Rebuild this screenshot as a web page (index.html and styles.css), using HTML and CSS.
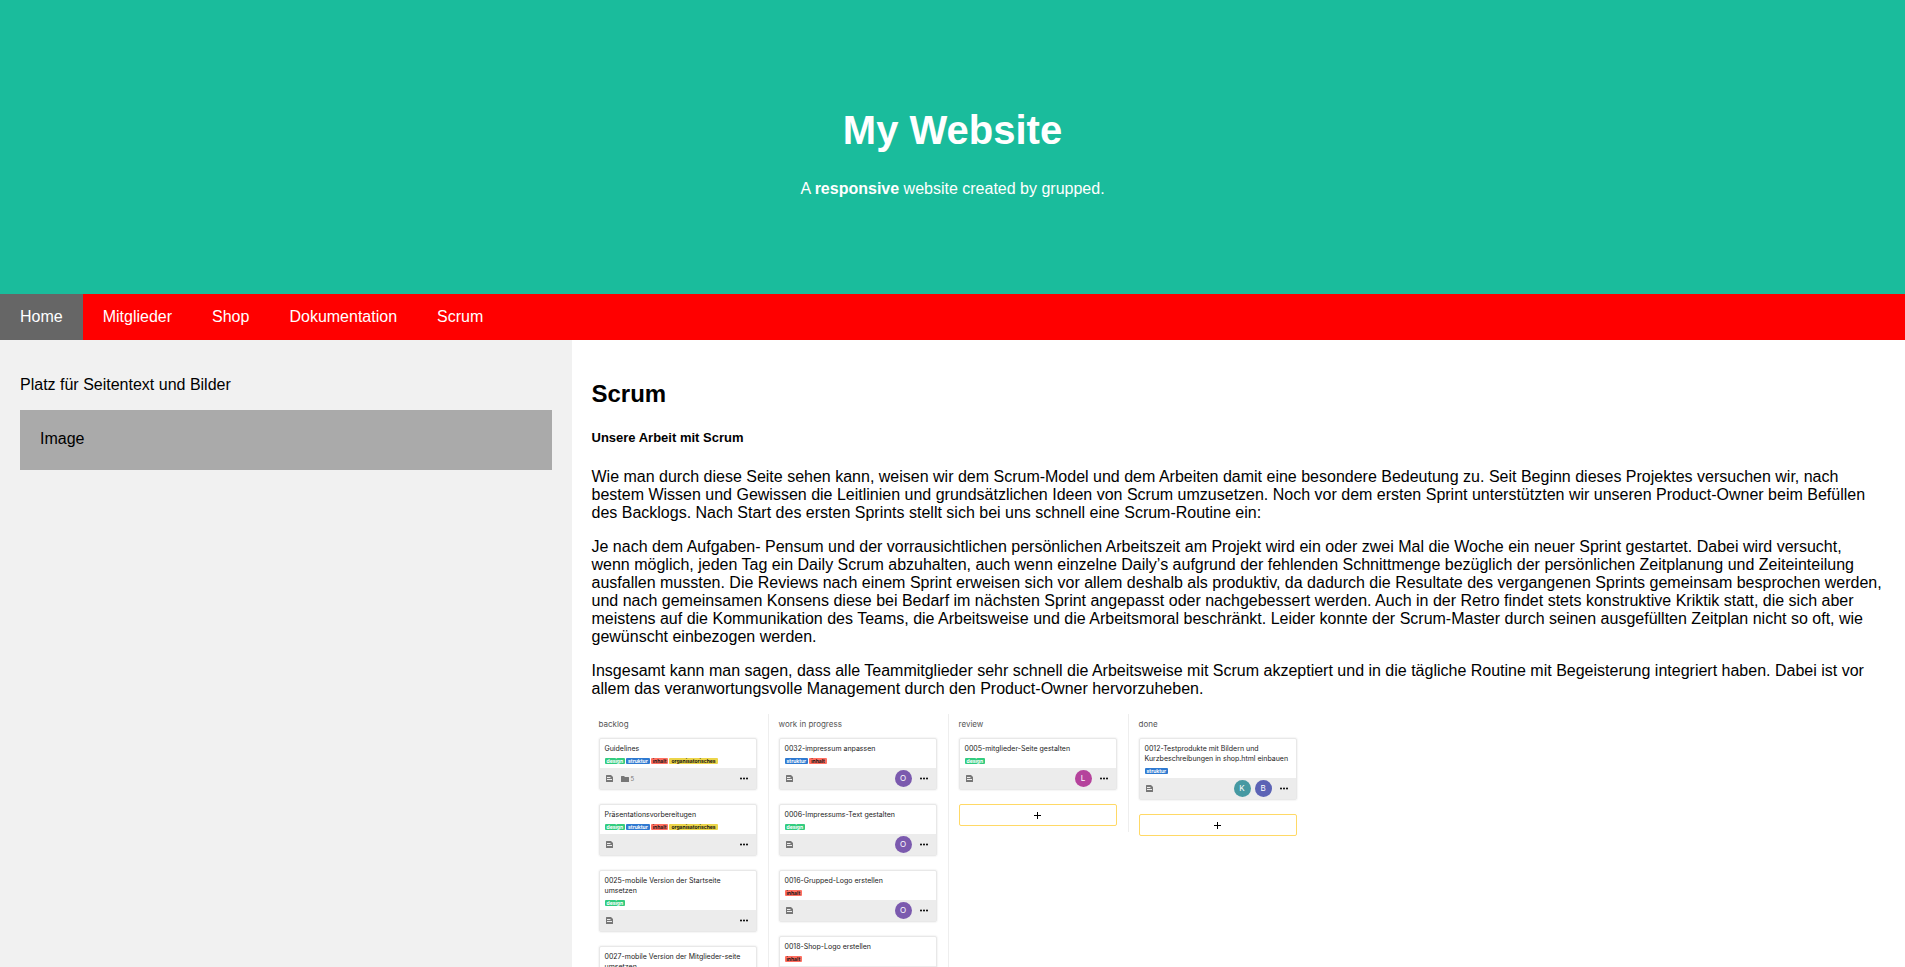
FILE: index.html
```
<!DOCTYPE html>
<html lang="de">
<head>
<meta charset="utf-8">
<meta name="viewport" content="width=device-width, initial-scale=1">
<title>My Website</title>
<link rel="stylesheet" href="styles.css">
</head>
<body>
<svg class="sprites" aria-hidden="true">
  <symbol id="note" viewBox="0 0 14 14"><path fill="#777" fill-rule="evenodd" d="M1 0h9l4 4v9a1 1 0 0 1-1 1H1a1 1 0 0 1-1-1V1a1 1 0 0 1 1-1zM2 4v2h7V4zM2 8v2h10V8z"/></symbol>
  <symbol id="folder" viewBox="0 0 16 12"><path fill="#777" d="M1 0h5l2 2h7a1 1 0 0 1 1 1v8a1 1 0 0 1-1 1H1a1 1 0 0 1-1-1V1a1 1 0 0 1 1-1z"/></symbol>
  <symbol id="dots" viewBox="0 0 16 4"><circle cx="2" cy="2" r="2"/><circle cx="8" cy="2" r="2"/><circle cx="14" cy="2" r="2"/></symbol>
  <symbol id="plus" viewBox="0 0 7 7"><path d="M3 0h1v3h3v1H4v3H3V4H0V3h3z"/></symbol>
</svg>

<header class="header">
  <h1>My Website</h1>
  <p>A <b>responsive</b> website created by grupped.</p>
</header>

<nav class="navbar">
  <a class="active" href="#">Home</a>
  <a href="#">Mitglieder</a>
  <a href="#">Shop</a>
  <a href="#">Dokumentation</a>
  <a href="#">Scrum</a>
</nav>

<div class="row">
  <aside class="side">
    <p>Platz für Seitentext und Bilder</p>
    <div class="fakeimg">Image</div>
  </aside>
  <main class="main">
    <h2>Scrum</h2>
    <h5>Unsere Arbeit mit Scrum</h5>
    <p>Wie man durch diese Seite sehen kann, weisen wir dem Scrum-Model und dem Arbeiten damit eine besondere Bedeutung zu. Seit Beginn dieses Projektes versuchen wir, nach bestem Wissen und Gewissen die Leitlinien und grundsätzlichen Ideen von Scrum umzusetzen. Noch vor dem ersten Sprint unterstützten wir unseren Product-Owner beim Befüllen des Backlogs. Nach Start des ersten Sprints stellt sich bei uns schnell eine Scrum-Routine ein:</p>
    <p>Je nach dem Aufgaben- Pensum und der vorrausichtlichen persönlichen Arbeitszeit am Projekt wird ein oder zwei Mal die Woche ein neuer Sprint gestartet. Dabei wird versucht,<br>wenn möglich, jeden Tag ein Daily Scrum abzuhalten, auch wenn einzelne Daily’s aufgrund der fehlenden Schnittmenge bezüglich der persönlichen Zeitplanung und Zeiteinteilung ausfallen mussten. Die Reviews nach einem Sprint erweisen sich vor allem deshalb als produktiv, da dadurch die Resultate des vergangenen Sprints gemeinsam besprochen werden, und nach gemeinsamen Konsens diese bei Bedarf im nächsten Sprint angepasst oder nachgebessert werden. Auch in der Retro findet stets konstruktive Kriktik statt, die sich aber meistens auf die Kommunikation des Teams, die Arbeitsweise und die Arbeitsmoral beschränkt. Leider konnte der Scrum-Master durch seinen ausgefüllten Zeitplan nicht so oft, wie gewünscht einbezogen werden.</p>
    <p>Insgesamt kann man sagen, dass alle Teammitglieder sehr schnell die Arbeitsweise mit Scrum akzeptiert und in die tägliche Routine mit Begeisterung integriert haben. Dabei ist vor allem das veranwortungsvolle Management durch den Product-Owner hervorzuheben.</p>

    <section class="board" aria-label="Scrum-Board">
      <div class="column">
        <h3>backlog</h3>
        <article class="card">
          <div class="body"><h4>Guidelines</h4>
            <div class="tags"><span class="tag design">design</span><span class="tag struktur">struktur</span><span class="tag inhalt">inhalt</span><span class="tag orga">organisatorisches</span></div></div>
          <div class="foot"><svg class="note"><use href="#note"/></svg><svg class="folder"><use href="#folder"/></svg><span class="count">5</span><svg class="dots"><use href="#dots"/></svg></div>
        </article>
        <article class="card">
          <div class="body"><h4>Präsentationsvorbereitugen</h4>
            <div class="tags"><span class="tag design">design</span><span class="tag struktur">struktur</span><span class="tag inhalt">inhalt</span><span class="tag orga">organisatorisches</span></div></div>
          <div class="foot"><svg class="note"><use href="#note"/></svg><svg class="dots"><use href="#dots"/></svg></div>
        </article>
        <article class="card">
          <div class="body"><h4>0025-mobile Version der Startseite<br>umsetzen</h4>
            <div class="tags"><span class="tag design">design</span></div></div>
          <div class="foot"><svg class="note"><use href="#note"/></svg><svg class="dots"><use href="#dots"/></svg></div>
        </article>
        <article class="card">
          <div class="body"><h4>0027-mobile Version der Mitglieder-seite<br>umsetzen</h4>
            <div class="tags"><span class="tag design">design</span></div></div>
          <div class="foot"><svg class="note"><use href="#note"/></svg><svg class="dots"><use href="#dots"/></svg></div>
        </article>
      </div>

      <div class="column">
        <h3>work in progress</h3>
        <article class="card">
          <div class="body"><h4>0032-impressum anpassen</h4>
            <div class="tags"><span class="tag struktur">struktur</span><span class="tag inhalt">inhalt</span></div></div>
          <div class="foot"><svg class="note"><use href="#note"/></svg><span class="people"><span class="avatar violet">O</span></span><svg class="dots"><use href="#dots"/></svg></div>
        </article>
        <article class="card">
          <div class="body"><h4>0006-Impressums-Text gestalten</h4>
            <div class="tags"><span class="tag design">design</span></div></div>
          <div class="foot"><svg class="note"><use href="#note"/></svg><span class="people"><span class="avatar violet">O</span></span><svg class="dots"><use href="#dots"/></svg></div>
        </article>
        <article class="card">
          <div class="body"><h4>0016-Grupped-Logo erstellen</h4>
            <div class="tags"><span class="tag inhalt">inhalt</span></div></div>
          <div class="foot"><svg class="note"><use href="#note"/></svg><span class="people"><span class="avatar violet">O</span></span><svg class="dots"><use href="#dots"/></svg></div>
        </article>
        <article class="card">
          <div class="body"><h4>0018-Shop-Logo erstellen</h4>
            <div class="tags"><span class="tag inhalt">inhalt</span></div></div>
          <div class="foot"><svg class="note"><use href="#note"/></svg><span class="people"><span class="avatar violet">O</span></span><svg class="dots"><use href="#dots"/></svg></div>
        </article>
      </div>

      <div class="column short">
        <h3>review</h3>
        <article class="card">
          <div class="body"><h4>0005-mitglieder-Seite gestalten</h4>
            <div class="tags"><span class="tag design">design</span></div></div>
          <div class="foot"><svg class="note"><use href="#note"/></svg><span class="people"><span class="avatar magenta">L</span></span><svg class="dots"><use href="#dots"/></svg></div>
        </article>
        <button class="add" type="button" aria-label="Karte hinzufügen"><svg class="plus"><use href="#plus"/></svg></button>
      </div>

      <div class="column short">
        <h3>done</h3>
        <article class="card">
          <div class="body"><h4>0012-Testprodukte mit Bildern und<br>Kurzbeschreibungen in shop.html einbauen</h4>
            <div class="tags"><span class="tag struktur">struktur</span></div></div>
          <div class="foot"><svg class="note"><use href="#note"/></svg><span class="people"><span class="avatar teal">K</span><span class="avatar blue">B</span></span><svg class="dots"><use href="#dots"/></svg></div>
        </article>
        <button class="add" type="button" aria-label="Karte hinzufügen"><svg class="plus"><use href="#plus"/></svg></button>
      </div>
    </section>
  </main>
</div>
</body>
</html>
```
FILE: styles.css
```
* { box-sizing: border-box; }

body {
  margin: 0;
  font-family: Arial, "Liberation Sans", Helvetica, sans-serif;
}

.sprites { display: none; }

.header {
  padding: 80px;
  text-align: center;
  background: #1abc9c;
  color: #fff;
}
.header h1 { margin: 27px 0; font-size: 40px; line-height: 46px; }
.header p { margin: 16px 0; }

.navbar { display: flex; background: #f00; }
.navbar a {
  padding: 14px 20px;
  color: #fff;
  text-decoration: none;
}
.navbar a.active { background: #666; }

.row { display: flex; }
.side { flex: 30%; padding: 20px; background: #f1f1f1; }
.main { flex: 70%; padding: 20px; background: #fff; }

.fakeimg { height: 60px; padding: 20px; background: #aaa; }

.main h2 { margin: 20px 0; font-size: 24px; }
.main h5 { margin: 22px 0; font-size: 13px; line-height: 16px; }

/* Scrum board */
.board {
  display: flex;
  align-items: flex-start;
  font-family: Inter, "Open Sans", sans-serif;
}
.column {
  width: 180px;
  padding: 3px 11px 15px 10px;
  border-right: 1px solid #eee;
}
.column:first-child { width: 177px; padding-left: 7px; }
.column:last-child { border-right: 0; padding-right: 12px; }
.column.short { padding-bottom: 6px; }

.board h3 {
  margin: 0 0 7px;
  font-size: 8px;
  line-height: 14px;
  font-weight: 400;
  color: #555;
}

.card {
  margin-bottom: 14px;
  border: 1px solid #e8e8e8;
  border-radius: 2px;
  box-shadow: 0 0 2px #ddd;
}
.body { padding: 5px 0 4px 5px; }
.board h4 {
  margin: 0 0 4px;
  font-size: 7px;
  line-height: 10px;
  font-weight: 400;
  color: #222;
  white-space: nowrap;
}
.tags { display: flex; gap: 1px; }
.tag {
  padding: 0 2px;
  border-radius: 1px;
  font: 700 5px/6px Inter, sans-serif;
  color: #111;
}
.design { background: #33cc7f; color: #fff; }
.struktur { background: #2f7ad1; color: #fff; }
.inhalt { background: #ff6f61; }
.orga { background: #ecd54a; }

.foot {
  display: flex;
  align-items: center;
  height: 21px;
  padding: 0 8px 0 6px;
  background: #ececec;
}
.note { width: 7px; height: 7px; }
.folder { width: 8px; height: 6px; margin-left: 8px; }
.count { margin-left: 2px; font-size: 6px; color: #777; }
.dots { width: 8px; height: 3px; margin-left: auto; }
.people { display: flex; gap: 4px; margin-left: auto; }
.people + .dots { margin-left: 8px; }
.avatar {
  width: 17px;
  height: 17px;
  border-radius: 50%;
  font-size: 8px;
  line-height: 17px;
  text-align: center;
  color: #fff;
}
.violet { background: #7b5aae; }
.magenta { background: #b5439c; }
.teal { background: #4699a2; }
.blue { background: #5c63b5; }

.add {
  display: flex;
  align-items: center;
  justify-content: center;
  width: 100%;
  height: 22px;
  padding: 0;
  border: 1px solid #ffd966;
  border-radius: 2px;
  background: #fff;
}
.plus { width: 7px; height: 7px; }
```
